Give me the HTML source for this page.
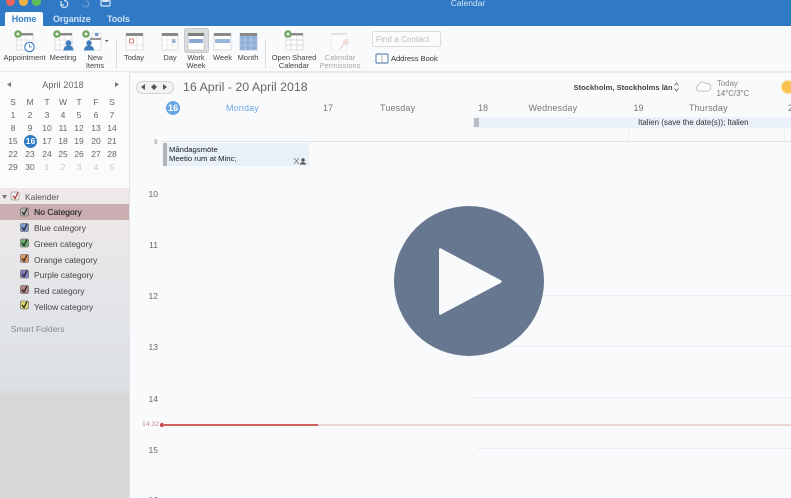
<!DOCTYPE html>
<html><head><meta charset="utf-8"><style>
html,body{margin:0;padding:0}
body{width:791px;height:498px;overflow:hidden;background:#f9fafc;position:relative;font-family:"Liberation Sans",sans-serif}
#w{position:absolute;left:0;top:0;width:791px;height:498px;overflow:hidden;filter:blur(.35px)}
.a{position:absolute;white-space:nowrap}
.c{position:absolute;text-align:center;white-space:nowrap}
.rb{font-size:7.5px;color:#444;line-height:8px;text-align:center;position:absolute;white-space:nowrap}
.m{position:absolute;width:16px;text-align:center;font-size:8.5px;color:#666}
.m.g{color:#c4c6c9}
.cat{position:absolute;left:34px;font-size:8.5px;color:#444;white-space:nowrap}
.h{position:absolute;right:633px;font-size:8.5px;color:#666;text-align:right}
.l{position:absolute;height:1px;background:#eaedf2}
</style></head><body><div id="w">

<!-- title bar -->
<div class="a" style="left:0;top:0;width:791px;height:26px;background:#3079c5"></div>
<div class="a" style="left:6px;top:-3px;width:9px;height:9px;border-radius:50%;background:#e9655d"></div>
<div class="a" style="left:19px;top:-3px;width:9px;height:9px;border-radius:50%;background:#eeb33f"></div>
<div class="a" style="left:32px;top:-3px;width:9px;height:9px;border-radius:50%;background:#5fbf57"></div>
<svg class="a" style="left:56px;top:0" width="60" height="8"><path d="M5 5.500a3.500 3.500 0 1 0 3-5M5 1v4h3" fill="none" stroke="#d7e6f5" stroke-width="1.200"/><path d="M30 1a3 3 0 1 1-3 4" fill="none" stroke="#7aa9da" stroke-width="1"/><rect x="45" y="0" width="9" height="6" rx="1" fill="none" stroke="#d7e6f5" stroke-width="1.200"/><rect x="46.500" y="-1" width="6" height="3" fill="#d7e6f5"/></svg>
<div class="c" style="left:430px;width:76px;top:-2px;font-size:8.5px;color:#d5e5f5">Calendar</div>

<!-- tabs -->
<div class="a" style="left:5px;top:12px;width:38px;height:14px;background:#f9fafc;border-radius:2px 2px 0 0"></div>
<div class="c" style="left:5px;width:38px;top:13.500px;font-size:9px;color:#3b82ca;font-weight:bold;letter-spacing:-.1px">Home</div>
<div class="a" style="left:53px;top:13.500px;font-size:9px;color:#cfe2f4;font-weight:bold;letter-spacing:-.1px">Organize</div>
<div class="a" style="left:107px;top:13.500px;font-size:9px;color:#cfe2f4;font-weight:bold;letter-spacing:-.1px">Tools</div>

<!-- ribbon -->
<div class="a" style="left:0;top:26px;width:791px;height:45px;background:#f9fafc"></div>
<div class="a" style="left:0;top:71px;width:791px;height:1.500px;background:#e7e8ea"></div>

<svg class="a" style="left:0;top:26px" width="460" height="46" fill="none">
<!-- appointment -->
<g><rect x="17" y="8" width="16" height="16" fill="#fff" stroke="#cfcfcf" stroke-width=".7"/><rect x="20" y="7" width="13" height="2.500" fill="#8a8a8a"/><path d="M17 14h16M17 19h16M21 10v14M26 10v14" stroke="#ddd" stroke-width=".7"/><circle cx="18" cy="8" r="3.800" fill="#6fa55f"/><circle cx="18" cy="8" r="1.500" fill="#f4f8f2"/><circle cx="29.500" cy="21" r="4.700" fill="#fff" stroke="#3d7cbf" stroke-width="1.100"/><path d="M29.500 18v3h2.500" stroke="#3d7cbf" stroke-width=".8"/></g>
<!-- meeting -->
<g><rect x="55" y="8" width="17" height="16" fill="#fff" stroke="#cfcfcf" stroke-width=".7"/><rect x="58" y="7" width="14" height="2.500" fill="#8a8a8a"/><path d="M55 14h17M55 19h17M60 10v14M65 10v14" stroke="#ddd" stroke-width=".7"/><circle cx="57" cy="8" r="3.800" fill="#6fa55f"/><circle cx="57" cy="8" r="1.500" fill="#f4f8f2"/><circle cx="68.500" cy="17" r="2.800" fill="#3f7dbd"/><path d="M63.500 24.500c0-7 10-7 10 0z" fill="#3f7dbd"/></g>
<!-- new items -->
<g><rect x="92" y="7" width="9" height="8" fill="#fff" stroke="#d2d2d2" stroke-width=".6"/><rect x="95" y="7" width="3.500" height="3" fill="#6c9cd0"/><rect x="90" y="12" width="11" height="12" fill="#fff" stroke="#cfcfcf" stroke-width=".6"/><rect x="90" y="12" width="11" height="2" fill="#999"/><circle cx="86" cy="8" r="3.800" fill="#6fa55f"/><circle cx="86" cy="8" r="1.500" fill="#f4f8f2"/><circle cx="89" cy="17" r="2.700" fill="#3f7dbd"/><path d="M84 24.500c0-7 10-7 10 0z" fill="#3f7dbd"/><path d="M105 14h3.500l-1.700 2z" fill="#555"/></g>
<path d="M116.500 13v29M265.500 13v29" stroke="#dddddf"/>
<!-- today -->
<g><rect x="126" y="8" width="17" height="16" fill="#fff" stroke="#cfcfcf" stroke-width=".7"/><rect x="126" y="7" width="17" height="3" fill="#8a8a8a"/><rect x="129.500" y="13" width="4" height="4" fill="#fff" stroke="#c8655f" stroke-width=".8"/><path d="M126 19h17M137 10v14" stroke="#ddd" stroke-width=".7"/></g>
<!-- selected work week bg -->
<rect x="184.500" y="2.500" width="24" height="24" rx="2" fill="#dadbdc" stroke="#c8c9ca"/>
<!-- day -->
<g><rect x="162" y="8" width="16" height="16" fill="#fff" stroke="#cfcfcf" stroke-width=".7"/><rect x="162" y="7" width="16" height="3" fill="#8a8a8a"/><rect x="172" y="13" width="3.500" height="4" fill="#86a8d2"/><path d="M162 14h16M162 19h16M167 10v14M172 10v14" stroke="#e0e0e0" stroke-width=".6"/></g>
<!-- work week -->
<g><rect x="188" y="8" width="16" height="16" fill="#fff" stroke="#bbb" stroke-width=".7"/><rect x="188" y="7" width="16" height="3" fill="#7d7d7d"/><rect x="189" y="13" width="14" height="4" fill="#86a8d2"/></g>
<!-- week -->
<g><rect x="214" y="8" width="17" height="16" fill="#fff" stroke="#cfcfcf" stroke-width=".7"/><rect x="214" y="7" width="17" height="3" fill="#8a8a8a"/><rect x="215" y="13" width="15" height="4" fill="#9ab7da"/></g>
<!-- month -->
<g><rect x="240" y="8" width="17" height="16" fill="#8fb0d8" stroke="#a9bdd6" stroke-width=".7"/><rect x="240" y="7" width="17" height="3" fill="#8a8a8a"/><path d="M240 14h17M240 19h17M245 10v14M251 10v14" stroke="#c8d8ec" stroke-width=".6"/></g>
<!-- open shared -->
<g><rect x="286" y="8" width="17" height="16" fill="#fff" stroke="#cfcfcf" stroke-width=".7"/><rect x="289" y="7" width="14" height="2.500" fill="#8a8a8a"/><path d="M286 14h17M286 19h17M291 10v14M297 10v14" stroke="#ccc" stroke-width=".7"/><circle cx="288" cy="8" r="3.800" fill="#6fa55f"/><circle cx="288" cy="8" r="1.500" fill="#f4f8f2"/></g>
<!-- permissions -->
<g opacity=".5"><rect x="331" y="8" width="16" height="16" fill="#fff" stroke="#ddd" stroke-width=".7"/><rect x="331" y="7" width="16" height="2" fill="#ccc"/><circle cx="346" cy="16" r="3" fill="#ecc0b8"/><path d="M344 18l-4 5" stroke="#ecc0b8" stroke-width="2"/></g>
<!-- address book -->
<g><rect x="376" y="28" width="12" height="9" rx="1" fill="#fff" stroke="#3f6ea5" stroke-width=".9"/><path d="M382 29v8" stroke="#888" stroke-width=".7"/></g>
</svg>

<div class="rb" style="left:2px;width:45px;top:54px">Appointment</div>
<div class="rb" style="left:48px;width:30px;top:54px">Meeting</div>
<div class="rb" style="left:81px;width:28px;top:54px">New</div>
<div class="rb" style="left:81px;width:28px;top:62px">Items</div>
<div class="rb" style="left:118px;width:32px;top:54px">Today</div>
<div class="rb" style="left:155px;width:30px;top:54px">Day</div>
<div class="rb" style="left:182px;width:28px;top:54px">Work</div>
<div class="rb" style="left:182px;width:28px;top:62px">Week</div>
<div class="rb" style="left:209px;width:27px;top:54px">Week</div>
<div class="rb" style="left:235px;width:26px;top:54px">Month</div>
<div class="rb" style="left:268px;width:52px;top:54px">Open Shared</div>
<div class="rb" style="left:268px;width:52px;top:62px">Calendar</div>
<div class="rb" style="left:316px;width:48px;top:54px;color:#a8a8a8">Calendar</div>
<div class="rb" style="left:316px;width:48px;top:62px;color:#a8a8a8">Permissions</div>
<div class="a" style="left:371.500px;top:31px;width:67px;height:14px;border:1px solid #dcdcdc;border-radius:2px;background:#fbfbfc"></div>
<div class="a" style="left:376px;top:34.500px;font-size:8px;color:#bbb;letter-spacing:.1px">Find a Contact</div>
<div class="rb" style="left:391px;top:55px;color:#333">Address Book</div>

<!-- sidebar -->
<div class="a" style="left:0;top:72px;width:129px;height:116px;background:#fbfbfd"></div>
<div class="a" style="left:0;top:188px;width:129px;height:310px;background:linear-gradient(180deg,#f0e8e8 0,#ebe7e9 50px,#e3e5e9 110px,#dfe2e7 170px,#dcdfe3 200px,#d8d8d8 208px,#d8d8d8 100%)"></div>
<div class="a" style="left:129px;top:72px;width:1px;height:426px;background:#e2e3e5"></div>
<div class="a" style="left:0;top:204px;width:129px;height:16px;background:#c9adb0"></div>

<svg class="a" style="left:0;top:80px" width="129" height="10"><path d="M7 4.500l4-2.500v5zM119 4.500l-4-2.500v5z" fill="#777"/></svg>
<div class="c" style="left:30px;width:66px;top:80px;font-size:9px;color:#666;letter-spacing:.1px">April 2018</div>

<div class="m" style="left:5px;top:97px">S</div><div class="m" style="left:22px;top:97px">M</div><div class="m" style="left:39px;top:97px">T</div><div class="m" style="left:55px;top:97px">W</div><div class="m" style="left:71px;top:97px">T</div><div class="m" style="left:88px;top:97px">F</div><div class="m" style="left:104px;top:97px">S</div>
<div class="m" style="left:5px;top:110px">1</div><div class="m" style="left:22px;top:110px">2</div><div class="m" style="left:39px;top:110px">3</div><div class="m" style="left:55px;top:110px">4</div><div class="m" style="left:71px;top:110px">5</div><div class="m" style="left:88px;top:110px">6</div><div class="m" style="left:104px;top:110px">7</div>
<div class="m" style="left:5px;top:123px">8</div><div class="m" style="left:22px;top:123px">9</div><div class="m" style="left:39px;top:123px">10</div><div class="m" style="left:55px;top:123px">11</div><div class="m" style="left:71px;top:123px">12</div><div class="m" style="left:88px;top:123px">13</div><div class="m" style="left:104px;top:123px">14</div>
<div class="a" style="left:24px;top:135px;width:13px;height:13px;border-radius:50%;background:#2f7cc4"></div>
<div class="m" style="left:5px;top:136px">15</div><div class="m" style="left:22.500px;top:136px;color:#fff;font-weight:bold">16</div><div class="m" style="left:39px;top:136px">17</div><div class="m" style="left:55px;top:136px">18</div><div class="m" style="left:71px;top:136px">19</div><div class="m" style="left:88px;top:136px">20</div><div class="m" style="left:104px;top:136px">21</div>
<div class="m" style="left:5px;top:149px">22</div><div class="m" style="left:22px;top:149px">23</div><div class="m" style="left:39px;top:149px">24</div><div class="m" style="left:55px;top:149px">25</div><div class="m" style="left:71px;top:149px">26</div><div class="m" style="left:88px;top:149px">27</div><div class="m" style="left:104px;top:149px">28</div>
<div class="m" style="left:5px;top:162px">29</div><div class="m" style="left:22px;top:162px">30</div><div class="m g" style="left:39px;top:162px">1</div><div class="m g" style="left:55px;top:162px">2</div><div class="m g" style="left:71px;top:162px">3</div><div class="m g" style="left:88px;top:162px">4</div><div class="m g" style="left:104px;top:162px">5</div>

<svg class="a" style="left:0;top:190px" width="30" height="130">
<path d="M2 5h5l-2.500 4z" fill="#777"/>
<rect x="11" y="2" width="8" height="8" rx="1.500" fill="#f0eced" stroke="#999" stroke-width=".7"/><path d="M13 6l2 2.500 3-6" fill="none" stroke="#a33" stroke-width="1.200"/>
<g stroke-width=".8" stroke="#777"><rect x="20.500" y="18" width="8" height="8" rx="1.500" fill="#b9aeb0"/><rect x="20.500" y="33.500" width="8" height="8" rx="1.500" fill="#7d9ad0"/><rect x="20.500" y="49" width="8" height="8" rx="1.500" fill="#6fb06c"/><rect x="20.500" y="64.500" width="8" height="8" rx="1.500" fill="#dc9a62"/><rect x="20.500" y="80" width="8" height="8" rx="1.500" fill="#7f7fc4"/><rect x="20.500" y="95.500" width="8" height="8" rx="1.500" fill="#b68484"/><rect x="20.500" y="111" width="8" height="8" rx="1.500" fill="#d8d56c"/></g>
<g fill="none" stroke="#222" stroke-width="1.200"><path d="M22 22l2 2.500 3-6"/><path d="M22 37.500l2 2.500 3-6"/><path d="M22 53l2 2.500 3-6"/><path d="M22 68.500l2 2.500 3-6"/><path d="M22 84l2 2.500 3-6"/><path d="M22 99.500l2 2.500 3-6"/><path d="M22 115l2 2.500 3-6"/></g>
</svg>
<div class="a" style="left:25px;top:192px;font-size:8.5px;color:#555">Kalender</div>
<div class="cat" style="top:207px;color:#2c2c2c;text-shadow:.2px 0 0 #2c2c2c">No Category</div>
<div class="cat" style="top:223px">Blue category</div>
<div class="cat" style="top:239px">Green category</div>
<div class="cat" style="top:254.500px">Orange category</div>
<div class="cat" style="top:270px">Purple category</div>
<div class="cat" style="top:286px">Red category</div>
<div class="cat" style="top:301.500px">Yellow category</div>
<div class="a" style="left:11px;top:323.500px;font-size:8.5px;color:#888">Smart Folders</div>

<!-- calendar header -->
<div class="a" style="left:136px;top:81px;width:36px;height:11px;border:.5px solid #d4d4d4;border-radius:6px;background:#f2f2f3"></div>
<svg class="a" style="left:136px;top:81px" width="38" height="12"><path d="M5 6l4-3v6zM27 3l4 3-4 3zM15 6l3-3 3 3-3 3z" fill="#555"/></svg>
<div class="a" style="left:183px;top:79.500px;font-size:12.400px;color:#666">16 April - 20 April 2018</div>
<div class="a" style="left:573.500px;top:82.500px;font-size:7.600px;color:#444;font-weight:bold">Stockholm, Stockholms län</div>
<svg class="a" style="left:673px;top:81px" width="8" height="12"><path d="M1.500 4.500L3.500 2l2 2.500M1.500 7.500l2 2.500 2-2.500" fill="none" stroke="#666" stroke-width=".9"/></svg>
<svg class="a" style="left:695px;top:80px" width="17" height="12"><path d="M3.500 11a3 3 0 0 1 0-5.800A4.500 4.500 0 0 1 11 3.500 3.800 3.800 0 0 1 13 11z" fill="#fbfbfc" stroke="#bfbfbf" stroke-width=".9"/></svg>
<div class="a" style="left:717px;top:79px;font-size:7.800px;color:#888">Today</div>
<div class="a" style="left:716.500px;top:89px;font-size:7.800px;color:#777">14°C/3°C</div>
<div class="a" style="left:782px;top:81px;width:12px;height:12px;border-radius:50%;background:#f7c24f;box-shadow:0 0 1px 1px #f9dc9a"></div>

<div class="a" style="left:166px;top:101px;width:14px;height:14px;border-radius:50%;background:#68a5e3"></div>
<div class="c" style="left:166px;width:14px;top:103px;font-size:9px;color:#fff;font-weight:bold">16</div>
<div class="a" style="left:226px;top:103px;font-size:9px;color:#70a8e2;letter-spacing:.15px">Monday</div>
<div class="a" style="left:323px;top:103px;font-size:9px;color:#777">17</div>
<div class="a" style="left:380px;top:103px;font-size:9px;color:#777;letter-spacing:.15px">Tuesday</div>
<div class="a" style="left:478px;top:103px;font-size:9px;color:#777">18</div>
<div class="a" style="left:528.500px;top:103px;font-size:9px;color:#777;letter-spacing:.15px">Wednesday</div>
<div class="a" style="left:633.500px;top:103px;font-size:9px;color:#777">19</div>
<div class="a" style="left:689px;top:103px;font-size:9px;color:#777;letter-spacing:.15px">Thursday</div>
<div class="a" style="left:788px;top:103px;font-size:9px;color:#777">20</div>

<!-- all-day event -->
<div class="a" style="left:473px;top:117px;width:318px;height:11px;background:#eaf1f8"></div>
<div class="a" style="left:474px;top:118px;width:4.500px;height:9px;background:#b7bcc2"></div>
<div class="a" style="left:638px;top:118px;font-size:7.900px;color:#333">Italien (save the date(s)); Italien</div>
<div class="a" style="left:627.500px;top:128px;width:1px;height:13px;background:#eceef1"></div>
<div class="a" style="left:783.500px;top:128px;width:1px;height:13px;background:#eceef1"></div>
<div class="a" style="left:162px;top:140.500px;width:629px;height:1.500px;background:#e3e4e6"></div>

<!-- event -->
<div class="a" style="left:163px;top:143px;width:146px;height:23px;background:#e8f0f8;border-radius:2px"></div>
<div class="a" style="left:163px;top:143px;width:4px;height:23px;background:#b0b5ba"></div>
<div class="a" style="left:169px;top:144.500px;font-size:7.700px;color:#222">Måndagsmöte</div>
<div class="a" style="left:169px;top:153.500px;font-size:7.700px;color:#222">Meetio rum at Minc;</div>
<svg class="a" style="left:293px;top:157px" width="14" height="8"><path d="M1 1l5 6M6 1L1 7" stroke="#777" stroke-width=".8"/><circle cx="10" cy="3" r="1.700" fill="#555"/><path d="M7 7.500c0-3 6-3 6 0z" fill="#555"/></svg>
<div class="a" style="left:154px;top:139px;font-size:6.500px;color:#888">9</div>

<!-- hours -->
<div class="h" style="top:189px">10</div>
<div class="h" style="top:240px">11</div>
<div class="h" style="top:291px">12</div>
<div class="h" style="top:342px">13</div>
<div class="h" style="top:393.500px">14</div>
<div class="h" style="top:444.500px">15</div>
<div class="h" style="top:495px">16</div>

<div class="l" style="left:473px;top:295px;width:318px"></div>
<div class="l" style="left:473px;top:346px;width:318px"></div>
<div class="l" style="left:473px;top:397px;width:318px"></div>
<div class="l" style="left:477px;top:448px;width:314px"></div>

<!-- now line -->
<div class="a" style="left:142px;top:421px;font-size:6.800px;color:#c98a88">14:32</div>
<div class="a" style="left:160px;top:423px;width:4px;height:4px;border-radius:50%;background:#c9403a"></div>
<div class="a" style="left:162px;top:424px;width:156px;height:2px;background:#d0625c"></div>
<div class="a" style="left:318px;top:424px;width:473px;height:2px;background:#ecd6d6"></div>

</div>
<!-- play button -->
<svg style="position:absolute;left:394px;top:206px" width="150" height="150"><circle cx="75" cy="75" r="75" fill="#66778f"/><path d="M47 42.500L106.500 74Q109 75.500 106.500 77L47 108.500Q45 109.500 45 107V44Q45 41.500 47 42.500Z" fill="#f9fafc"/></svg>
</body></html>
